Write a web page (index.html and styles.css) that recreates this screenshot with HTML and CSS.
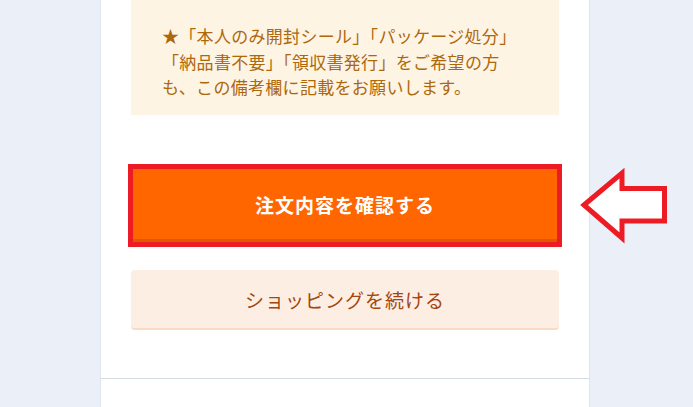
FILE: index.html
```html
<!DOCTYPE html>
<html lang="ja">
<head>
<meta charset="utf-8">
<title>注文内容の確認</title>
<link rel="stylesheet" href="styles.css">
</head>
<body>
<div class="page">
  <main class="panel">
    <div class="panel-body">
      <div class="note">
        <p>★「本人のみ開封シール」「パッケージ処分」<br>「納品書不要」「領収書発行」をご希望の方<br>も、この備考欄に記載をお願いします。</p>
      </div>
      <button class="btn btn-primary" type="button">注文内容を確認する</button>
      <button class="btn btn-secondary" type="button">ショッピングを続ける</button>
    </div>
    <div class="panel-footer"></div>
  </main>
  <svg class="callout-arrow" width="100" height="90" viewBox="570 160 100 90" aria-hidden="true">
    <polygon points="584,205 622,173 622,188.5 664.5,188.5 664.5,221 622,221 622,238" fill="#ffffff" stroke="#ed1c24" stroke-width="5" stroke-linejoin="miter"/>
  </svg>
</div>
</body>
</html>
```
FILE: styles.css
```css
* { box-sizing: border-box; }
html, body { margin: 0; padding: 0; }
body {
  background: #ebeff8;
  font-family: "Noto Sans CJK JP", "Noto Sans", sans-serif;
  overflow: hidden;
}
.page {
  position: relative;
  height: 407px;
}
.panel {
  margin-left: 100px;
  width: 490px;
  height: 407px;
  background: #ffffff;
  border-left: 1px solid #dfe4ee;
  border-right: 1px solid #dfe4ee;
  display: flex;
  flex-direction: column;
}
.panel-body {
  padding: 0 30px 48px;
  display: flex;
  flex-direction: column;
}
.note {
  background: #fef4e4;
  height: 115px;
  padding: 23px 20px 15px 31px;
}
.note p {
  margin: 0;
  color: #ad680c;
  font-size: 17px;
  line-height: 25.6px;
  letter-spacing: 0.3px;
  white-space: nowrap;
}
.btn {
  display: flex;
  align-items: center;
  justify-content: center;
  width: 100%;
  border: 0;
  font-family: "Noto Sans CJK JP", "Noto Sans", sans-serif;
  font-size: 19px;
  letter-spacing: 1px;
  cursor: pointer;
  padding: 0;
}
.btn-primary {
  margin-top: 52px;
  height: 77px;
  background: #ff6600;
  border-bottom: 5px solid #e05800;
  color: #ffffff;
  font-weight: 700;
  padding-top: 2px;
  outline: 5px solid #ed1c24;
  outline-offset: -2px;
}
.btn-secondary {
  margin-top: 26px;
  height: 60px;
  background: #fdeee3;
  border-bottom: 2px solid #fadac2;
  border-radius: 4px;
  color: #a3460f;
  font-weight: 400;
}
.panel-footer {
  border-top: 1px solid #d3dbe3;
  flex: 1;
}
.callout-arrow {
  position: absolute;
  left: 570px;
  top: 160px;
}
```
